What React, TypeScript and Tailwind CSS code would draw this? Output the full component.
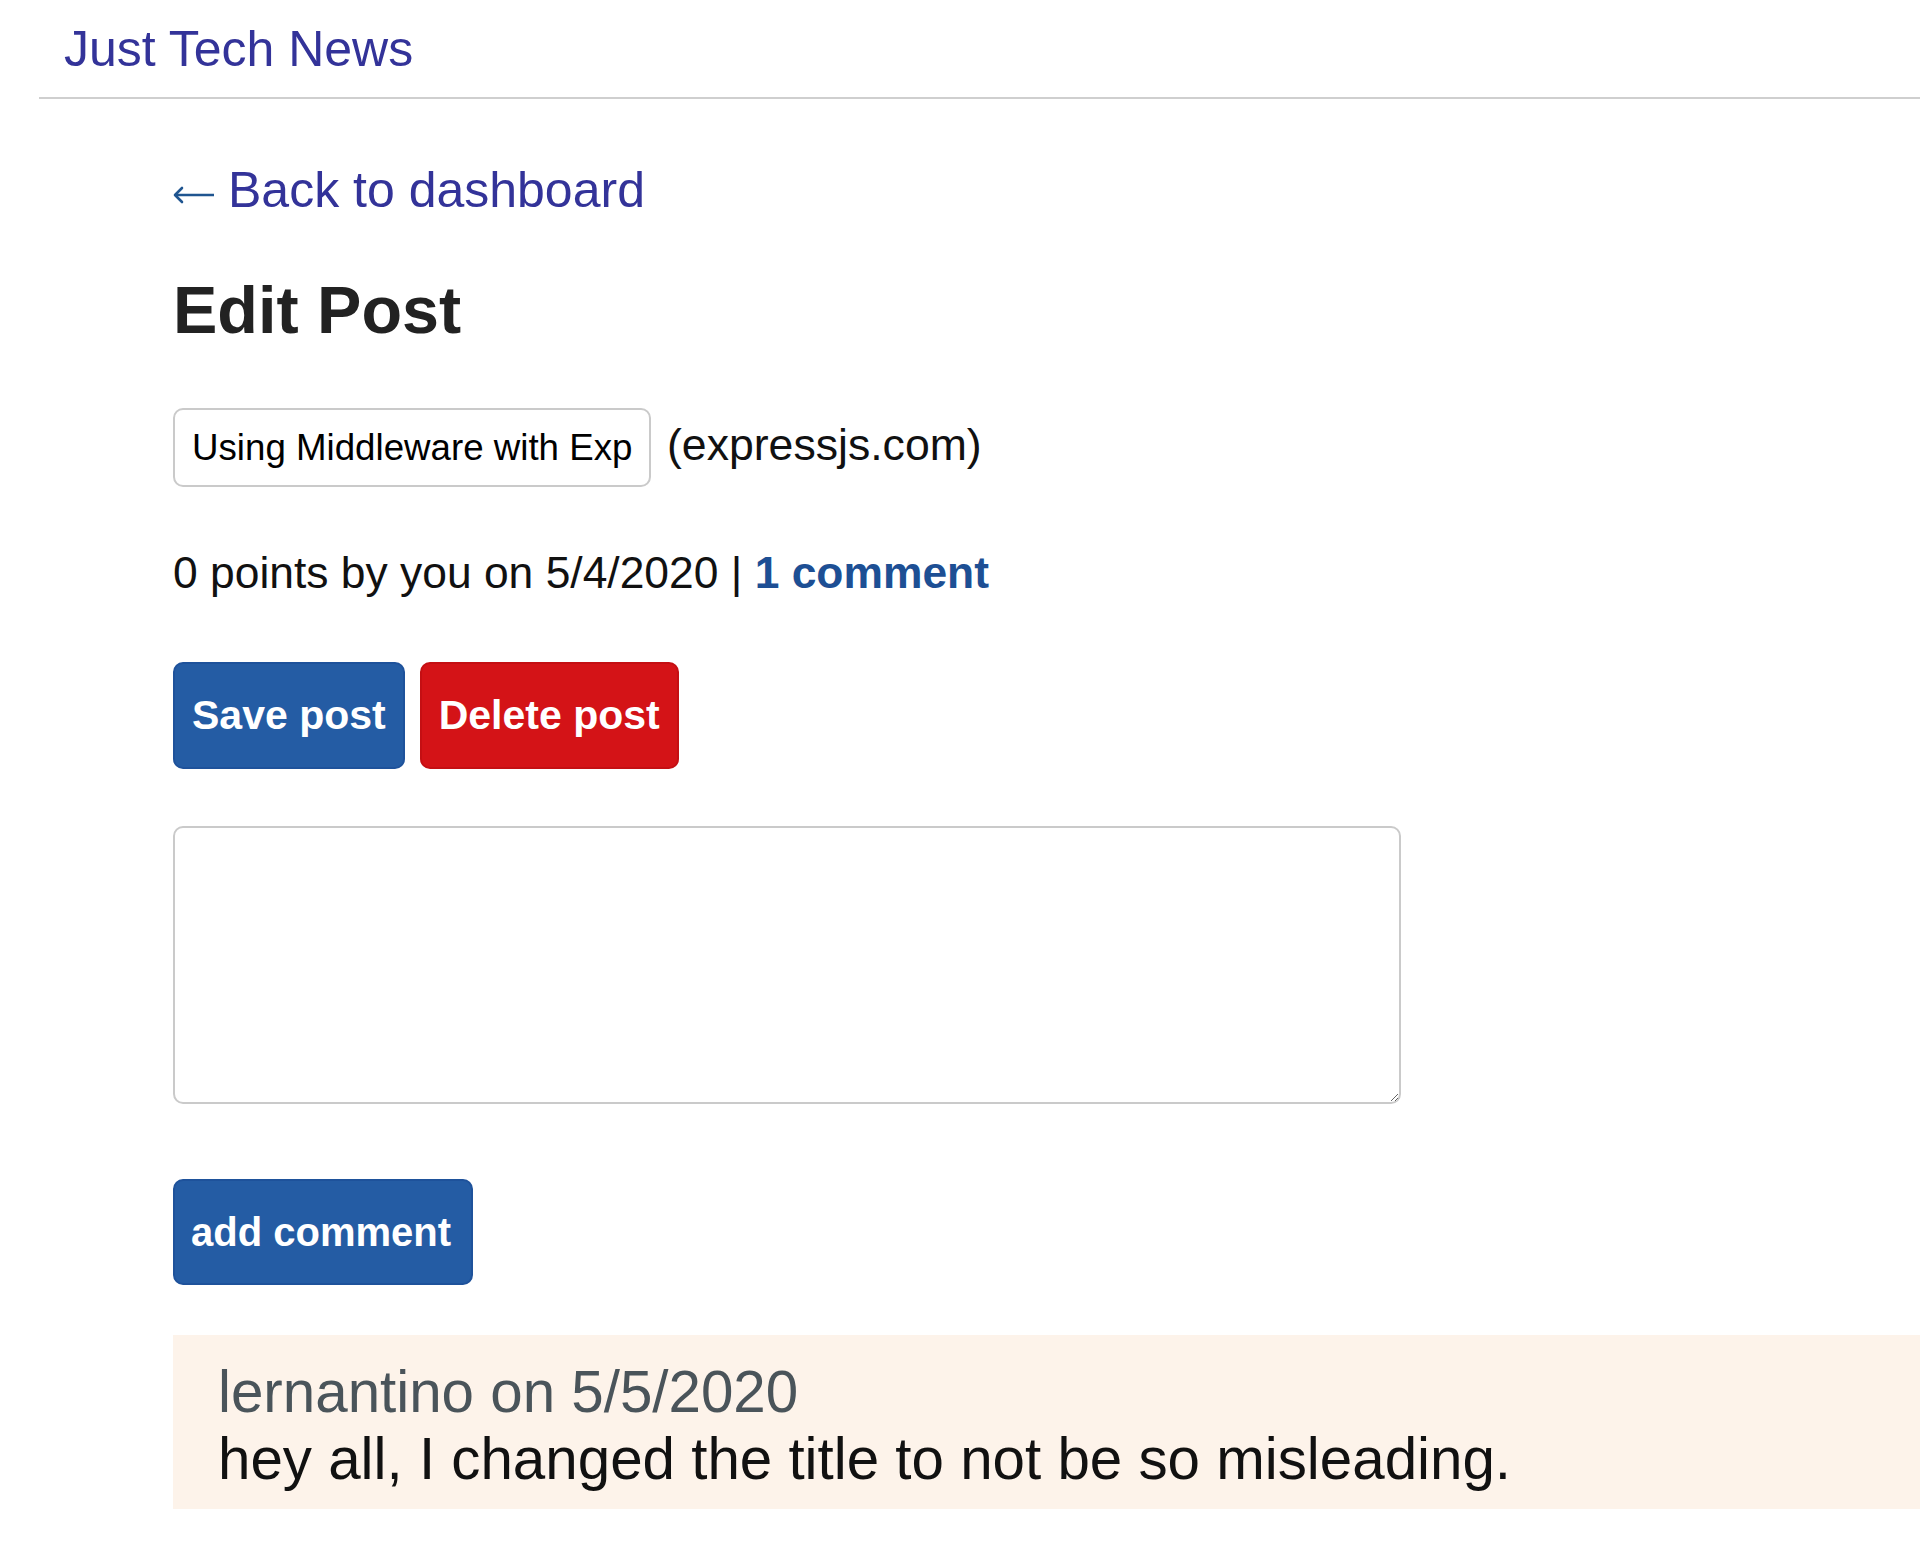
import React from "react";

export default function App() {
  return (
    <div className="min-h-[1553px] bg-white font-['Liberation_Sans',Arial,sans-serif] text-[#111]">
      <header className="ml-[39px] pl-[25px] pt-[19px] pb-[18px] border-b-2 border-[#cfcfcf]">
        <a href="#" className="block text-[50px] leading-[60px] text-[#333399]">
          Just Tech News
        </a>
      </header>

      <main className="pl-[173px]">
        <a href="#" className="mt-[63px] flex items-center text-[50px] leading-[56px] text-[#333399]">
          <svg width="42" height="18" viewBox="0 0 42 18" className="mr-[13px] mt-[10px] shrink-0">
            <path d="M2 9 H41" stroke="#1f5590" strokeWidth="2.6" fill="none" />
            <path d="M9 2 L2 9 L9 16" stroke="#1f5590" strokeWidth="2.6" fill="none" strokeLinecap="round" strokeLinejoin="round" />
          </svg>
          <span>Back to dashboard</span>
        </a>

        <h2 className="mt-[54px] text-[66.5px] leading-[76px] font-bold text-[#222]">Edit Post</h2>

        <div className="mt-[60px] flex items-baseline gap-[16px]">
          <input
            type="text"
            defaultValue="Using Middleware with Express"
            className="w-[478px] h-[79px] rounded-[10px] border-2 border-[#cacaca] pl-[17px] pr-[17px] text-[36.7px] text-black font-['Liberation_Sans',Arial,sans-serif] outline-none"
          />
          <span className="text-[44.6px] leading-[50px] text-[#111]">(expressjs.com)</span>
        </div>

        <p className="mt-[61px] text-[44.4px] leading-[50px] text-[#111]">
          0 points by you on 5/4/2020 |{" "}
          <a href="#" className="font-bold text-[#1d4f94]">1 comment</a>
        </p>

        <div className="mt-[64px] flex gap-[15px]">
          <button className="h-[107px] px-[17px] rounded-[10px] border-2 border-[#1e529b] bg-[#245ca4] text-white font-bold text-[41px] leading-none">
            Save post
          </button>
          <button className="h-[107px] px-[17px] rounded-[10px] border-2 border-[#c40f13] bg-[#d41317] text-white font-bold text-[41px] leading-none">
            Delete post
          </button>
        </div>

        <textarea className="mt-[57px] block w-[1228px] h-[278px] rounded-[10px] border-2 border-[#cacaca] outline-none" />

        <button className="mt-[75px] block h-[106px] w-[300px] rounded-[10px] border-2 border-[#1e529b] bg-[#245ca4] pr-[4px] text-white font-bold text-[40px] leading-none">
          add comment
        </button>

        <div className="mt-[50px] bg-[#fdf3ea] pl-[45px] pt-[23px] pb-[17px] text-[58.3px] leading-[67px]">
          <p className="text-[#4a545a]">lernantino on 5/5/2020</p>
          <p className="text-[#111]">hey all, I changed the title to not be so misleading.</p>
        </div>
      </main>
    </div>
  );
}
